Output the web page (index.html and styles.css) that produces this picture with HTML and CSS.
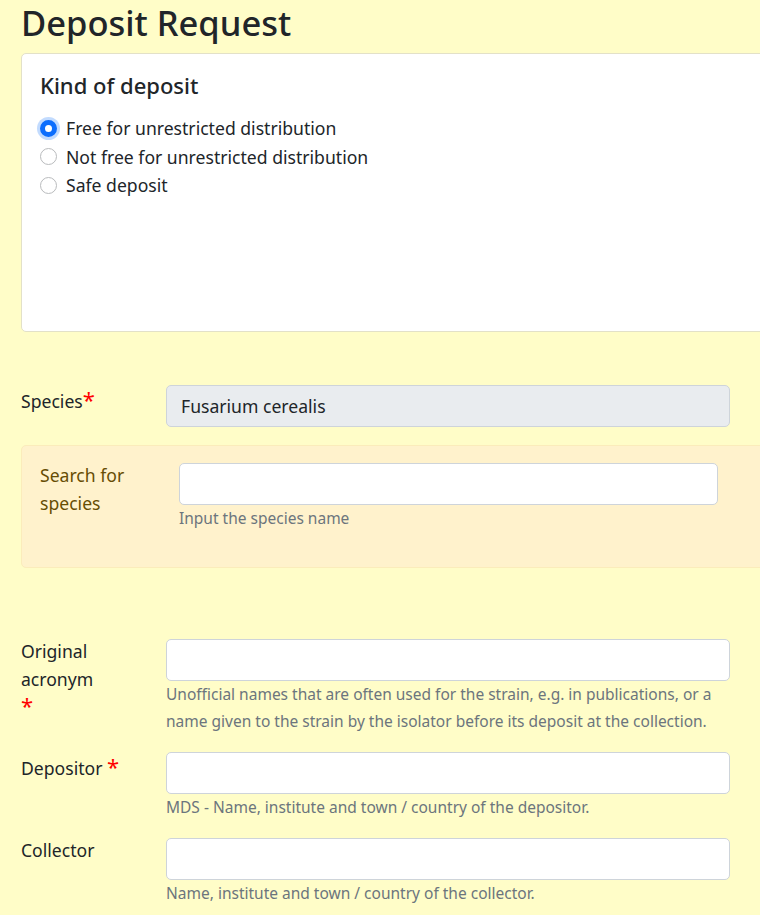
FILE: index.html
```html
<!DOCTYPE html>
<html>
<head>
<meta charset="utf-8">
<link rel="stylesheet" href="styles.css">
</head>
<body>
<div class="page">
  <h1 class="title">Deposit Request</h1>
  <div class="card">
    <h2 class="card-title">Kind of deposit</h2>
    <label class="radio"><span class="dot checked"></span>Free for unrestricted distribution</label>
    <label class="radio"><span class="dot"></span>Not free for unrestricted distribution</label>
    <label class="radio"><span class="dot"></span>Safe deposit</label>
  </div>

  <div class="row species-row">
    <div class="label label-req">Species<span class="req">*</span></div>
    <div class="field"><div class="input readonly">Fusarium cerealis</div></div>
  </div>

  <div class="panel">
    <div class="panel-label">Search for species</div>
    <div class="panel-field">
      <div class="input"></div>
      <div class="help">Input the species name</div>
    </div>
  </div>

  <div class="row acronym-row">
    <div class="label label-narrow">Original acronym <span class="req">*</span></div>
    <div class="field">
      <div class="input"></div>
      <div class="help">Unofficial names that are often used for the strain, e.g. in publications, or a name given to the strain by the isolator before its deposit at the collection.</div>
    </div>
  </div>

  <div class="row">
    <div class="label label-req">Depositor <span class="req">*</span></div>
    <div class="field">
      <div class="input"></div>
      <div class="help">MDS - Name, institute and town / country of the depositor.</div>
    </div>
  </div>

  <div class="row collector-row">
    <div class="label">Collector</div>
    <div class="field">
      <div class="input"></div>
      <div class="help">Name, institute and town / country of the collector.</div>
    </div>
  </div>
</div>
</body>
</html>
```

FILE: styles.css
```css
html, body {
  margin: 0;
  padding: 0;
  overflow: hidden;
  background: #fffdc8;
}
body {
  font-family: "Noto Sans", "DejaVu Sans", sans-serif;
  color: #212529;
  font-size: 17.6px;
  line-height: 28px;
}
.page {
  padding-left: 21px;
  width: 780px;
}
.title {
  margin: 0;
  font-size: 34.5px;
  font-weight: 500;
  line-height: 46px;
  height: 53px;
}
.card {
  background: #fff;
  border: 1px solid #e3e1c8;
  border-radius: 5px;
  padding: 16px 18px;
  box-sizing: border-box;
  height: 279px;
}
.card-title {
  margin: 0 0 14px;
  font-size: 22px;
  font-weight: 500;
  line-height: 30px;
}
.radio {
  display: flex;
  align-items: center;
  height: 28.5px;
}
.dot {
  width: 17px;
  height: 17px;
  border-radius: 50%;
  border: 1px solid #b9bbbd;
  background: #fff;
  box-sizing: border-box;
  margin-right: 9px;
}
.dot.checked {
  border: 5px solid #0d6efd;
  background: #fff;
  box-shadow: 0 0 0 3px rgba(13, 110, 253, 0.25);
}
.row {
  display: flex;
  width: 709px;
  margin-bottom: 17px;
}
.species-row {
  margin-top: 53px;
  margin-bottom: 18px;
}
.acronym-row {
  margin-top: 71px;
}
.collector-row {
  margin-top: 1px;
}
.label {
  width: 145px;
  flex: none;
  padding-right: 12px;
  margin-top: -2px;
  box-sizing: border-box;
}
.label-narrow {
  padding-right: 62px;
}
.label-req {
  margin-top: 0;
  padding-top: 2px;
}
.req {
  color: #f00;
  font-size: 22px;
  line-height: 0;
}
.field {
  flex: 1;
}
.input {
  height: 42px;
  box-sizing: border-box;
  background: #fff;
  border: 1px solid #ced4da;
  border-radius: 5px;
  padding: 6px 14px;
}
.input.readonly {
  background: #e9ecef;
}
.help {
  font-size: 15.5px;
  line-height: 27px;
  color: #6c757d;
}
.panel {
  display: flex;
  background: #fff2cc;
  border: 1px solid #fbecbb;
  border-radius: 5px;
  padding: 17px 18px;
  height: 123px;
  box-sizing: border-box;
  width: 760px;
}
.panel-label {
  width: 139px;
  flex: none;
  color: #664d03;
  margin-top: -2px;
}
.panel-field {
  width: 539px;
  flex: none;
}
```
